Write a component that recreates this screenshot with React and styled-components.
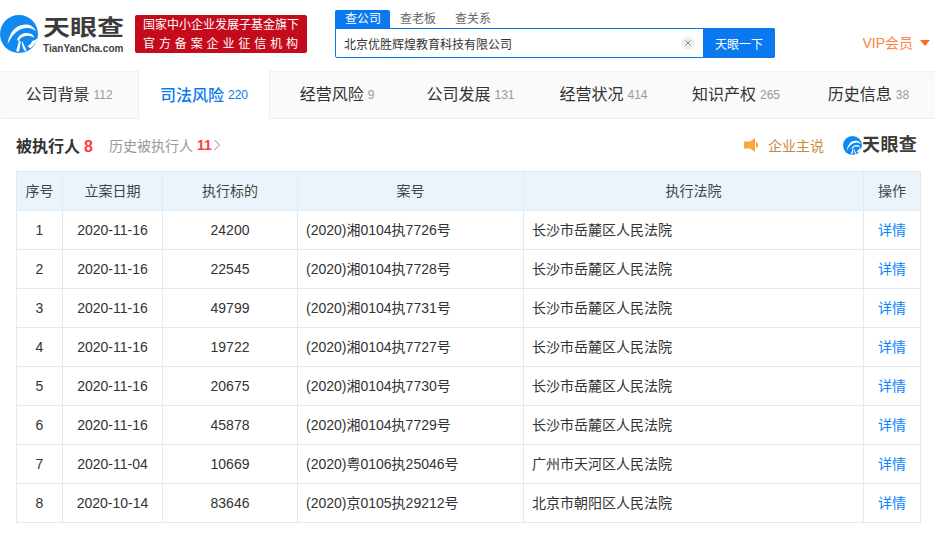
import React from 'react';
import styled, { createGlobalStyle } from 'styled-components';

const FONT = '"Liberation Sans", "Noto Sans CJK SC", sans-serif';

const GlobalStyle = createGlobalStyle`
  html, body {
    margin: 0;
    padding: 0;
    background: #fff;
    font-family: ${FONT};
  }
  * { box-sizing: border-box; }
`;

const Page = styled.div`
  width: 935px;
  height: 547px;
  overflow: hidden;
  background: #fff;
`;

// Top bar
const Header = styled.header`
  height: 71px;
  display: flex;
  align-items: flex-start;
  padding: 15px 0 0 0;
`;

const Logo = styled.div`
  display: flex;
  align-items: flex-start;
  gap: 5px;
  width: 135px;
`;

const LogoWords = styled.div`
  display: flex;
  flex-direction: column;
  align-items: flex-start;
`;

const LogoName = styled.div`
  font-size: 27px;
  line-height: 27px;
  height: 24px;
  margin-top: 3px;
  margin-bottom: 1px;
  font-weight: 700;
  color: #3b3b3b;
  transform: scaleY(0.78);
  transform-origin: center top;
`;

const LogoDomain = styled.div`
  font-size: 10px;
  line-height: 11px;
  font-weight: 700;
  color: #444;
`;

const Badge = styled.div`
  width: 172px;
  height: 38px;
  background: #c40b1c;
  border-radius: 2px;
  color: #fff;
  font-size: 12px;
  line-height: 19px;
  padding: 1px 0 0 8px;
`;

const BadgeLine = styled.div`
  white-space: nowrap;
  letter-spacing: ${props => props.$spacing}px;
`;

const Search = styled.div`
  width: 440px;
  margin-left: 28px;
  margin-top: -5px;
`;

const SearchTabs = styled.div`
  display: flex;
  height: 18px;
`;

const SearchTab = styled.div`
  width: 55px;
  padding-left: 10px;
  font-size: 12px;
  line-height: 18px;
  border-radius: 2px 2px 0 0;
  color: ${props => (props.$active ? '#fff' : '#666')};
  background: ${props => (props.$active ? '#0a79f0' : 'transparent')};
`;

const SearchBox = styled.div`
  display: flex;
  height: 30px;
  border: 1px solid #0a79f0;
  border-radius: 0 2px 2px 2px;
`;

const SearchText = styled.div`
  flex: 1;
  display: flex;
  align-items: center;
  justify-content: space-between;
  padding: 0 8px 0 8px;
  font-size: 12px;
  color: #333;
`;

const ClearButton = styled.div`
  width: 14px;
  height: 14px;
  border-radius: 50%;
  background: #f0f0f0;
  display: flex;
  align-items: center;
  justify-content: center;
`;

const SearchButton = styled.div`
  width: 72px;
  margin: -1px -1px -1px 0;
  background: #0a79f0;
  border-radius: 0 2px 2px 0;
  color: #fff;
  font-size: 12px;
  display: flex;
  align-items: center;
  justify-content: center;
`;

const Vip = styled.div`
  margin-left: auto;
  margin-top: 20px;
  padding-right: 5px;
  display: flex;
  align-items: center;
  gap: 7px;
  color: #ff8144;
  font-size: 14px;
  line-height: 16px;
`;

const Caret = styled.span`
  width: 0;
  height: 0;
  border-left: 5px solid transparent;
  border-right: 5px solid transparent;
  border-top: 6px solid #ff6a22;
`;

// Section tabs
const TabBar = styled.nav`
  height: 48px;
  display: grid;
  grid-template-columns: 138px 132px 134px 133px 133px 132px 133px;
  background: #fafafa;
  border-bottom: 1px solid #eee;
  box-shadow: inset 0 2px 2px -1px #ececec;
`;

const Tab = styled.div`
  display: flex;
  align-items: center;
  justify-content: center;
  gap: 4px;
  padding-bottom: 3px;
  font-size: 16px;
  color: ${props => (props.$active ? '#0a7af0' : '#333')};
  background: ${props => (props.$active ? '#fff' : 'transparent')};
  font-weight: ${props => (props.$active ? 500 : 400)};
  ${props => props.$active && 'margin-bottom: -1px; border-left: 1px solid #f0f0f0; border-right: 1px solid #f0f0f0;'}
`;

const TabCount = styled.span`
  font-size: 12px;
  margin-top: 3px;
  font-weight: 400;
  color: ${props => (props.$active ? '#0a7af0' : '#999')};
`;

// Section title row
const TitleRow = styled.div`
  height: 52px;
  display: flex;
  align-items: center;
  padding: 0 18px 0 16px;
`;

const Title = styled.div`
  font-size: 16px;
  font-weight: 700;
  color: #333;
`;

const RedCount = styled.span`
  font-weight: 700;
  color: #ff3b3b;
  margin-left: ${props => props.$gap}px;
`;

const History = styled.div`
  margin-left: 16px;
  display: flex;
  align-items: center;
  font-size: 14px;
  color: #999;
`;

const Chevron = styled.svg`
  margin-left: 1px;
`;

const Right = styled.div`
  margin-left: auto;
  display: flex;
  align-items: center;
`;

const Claim = styled.div`
  display: flex;
  align-items: center;
  gap: 8px;
  font-size: 14px;
  color: #c98a3c;
  margin-right: 19px;
`;

const SmallLogo = styled.div`
  display: flex;
  align-items: center;
  font-size: 18px;
  line-height: 20px;
  font-weight: 700;
  letter-spacing: 0.3px;
  color: #3b3b3b;
`;

// Data table
const Table = styled.table`
  width: 904px;
  margin-left: 16px;
  border-collapse: collapse;
  table-layout: fixed;
  font-size: 14px;
  color: #333;
  border: 1px solid #e0ecf5;
`;

const HeadCell = styled.th`
  height: 39px;
  padding: 0 0 3px;
  background: #ebf4fa;
  border: 1px solid #e0ecf5;
  font-weight: 400;
  text-align: center;
  color: #444;
`;

const Cell = styled.td`
  height: 39px;
  padding: ${props => (props.$left ? '0 8px 2px' : '0 0 1px')};
  border: 1px solid #e0ecf5;
  text-align: ${props => (props.$left ? 'left' : 'center')};
`;

const ActionCell = styled(Cell)`
  padding: 0 0 3px;
`;

const DetailLink = styled.a`
  color: #0a84ff;
  font-size: 14px;
  text-decoration: none;
`;

const LogoMark = ({ size }) => (
  <svg width={size} height={size} viewBox="0 0 40 40">
    <circle cx="20" cy="20" r="20" fill="#1089f0" />
    <path d="M8 31C9 20 16 9 28 10c4 0 8 3 10 7-4-3-8-4-12-3C18 15 12 22 8 31Z" fill="#fff" />
    <path d="M18 26c2-6 9-9 15-6 2 1 3 3 3 4-4-3-11-3-15 1l-1 3Z" fill="#fff" />
    <path d="M40 24c-1 4-4 8-8 11l-3-2c2-2 4-3 5-6 2 0 4-1 6-3Z" fill="#fff" />
    <path d="M20 27l2 1-2 11-3-1Z" fill="#fff" />
    <path d="M24 28c1 4 3 7 4 9l-2 1c-2-3-3-6-3-9Z" fill="#fff" />
  </svg>
);

const tabs = [
  ['公司背景', 112],
  ['司法风险', 220],
  ['经营风险', 9],
  ['公司发展', 131],
  ['经营状况', 414],
  ['知识产权', 265],
  ['历史信息', 38],
];

const rows = [
  ['2020-11-16', '24200', '(2020)湘0104执7726号', '长沙市岳麓区人民法院'],
  ['2020-11-16', '22545', '(2020)湘0104执7728号', '长沙市岳麓区人民法院'],
  ['2020-11-16', '49799', '(2020)湘0104执7731号', '长沙市岳麓区人民法院'],
  ['2020-11-16', '19722', '(2020)湘0104执7727号', '长沙市岳麓区人民法院'],
  ['2020-11-16', '20675', '(2020)湘0104执7730号', '长沙市岳麓区人民法院'],
  ['2020-11-16', '45878', '(2020)湘0104执7729号', '长沙市岳麓区人民法院'],
  ['2020-11-04', '10669', '(2020)粤0106执25046号', '广州市天河区人民法院'],
  ['2020-10-14', '83646', '(2020)京0105执29212号', '北京市朝阳区人民法院'],
];

export default function App() {
  return (
    <Page>
      <GlobalStyle />
      <Header>
        <Logo>
          <LogoMark size={38} />
          <LogoWords>
            <LogoName>天眼查</LogoName>
            <LogoDomain>TianYanCha.com</LogoDomain>
          </LogoWords>
        </Logo>
        <Badge>
          <BadgeLine $spacing={0}>国家中小企业发展子基金旗下</BadgeLine>
          <BadgeLine $spacing={3.9}>官方备案企业征信机构</BadgeLine>
        </Badge>
        <Search>
          <SearchTabs>
            <SearchTab $active>查公司</SearchTab>
            <SearchTab>查老板</SearchTab>
            <SearchTab>查关系</SearchTab>
          </SearchTabs>
          <SearchBox>
            <SearchText>
              北京优胜辉煌教育科技有限公司
              <ClearButton>
                <svg width="6" height="6" viewBox="0 0 6 6">
                  <path d="M0.5 0.5l5 5M5.5 0.5l-5 5" stroke="#777" strokeWidth="0.9" />
                </svg>
              </ClearButton>
            </SearchText>
            <SearchButton>天眼一下</SearchButton>
          </SearchBox>
        </Search>
        <Vip>VIP会员<Caret /></Vip>
      </Header>
      <TabBar>
        {tabs.map(([name, count], i) => (
          <Tab key={name} $active={i === 1}>
            {name}
            <TabCount $active={i === 1}>{count}</TabCount>
          </Tab>
        ))}
      </TabBar>
      <TitleRow>
        <Title>被执行人<RedCount $gap={4}>8</RedCount></Title>
        <History>
          历史被执行人<RedCount $gap={4}>11</RedCount>
          <Chevron width="8" height="12" viewBox="0 0 8 12">
            <path d="M1.5 1l5 5-5 5" fill="none" stroke="#888" strokeWidth="1" />
          </Chevron>
        </History>
        <Right>
          <Claim>
            <svg width="16" height="16" viewBox="0 0 16 16">
              <path d="M0 4.5h6L11 1v14l-5-3.5H0Z" fill="#f9a83a" />
              <path d="M12 5c3 1 3 5 0 6Z" fill="#f9a83a" />
            </svg>
            企业主说
          </Claim>
          <SmallLogo>
            <LogoMark size={19} />
            天眼查
          </SmallLogo>
        </Right>
      </TitleRow>
      <Table>
        <colgroup>
          <col style={{ width: 46 }} />
          <col style={{ width: 100 }} />
          <col style={{ width: 135 }} />
          <col style={{ width: 226 }} />
          <col style={{ width: 340 }} />
          <col style={{ width: 57 }} />
        </colgroup>
        <thead>
          <tr>
            {['序号', '立案日期', '执行标的', '案号', '执行法院', '操作'].map(h => (
              <HeadCell key={h}>{h}</HeadCell>
            ))}
          </tr>
        </thead>
        <tbody>
          {rows.map((row, i) => (
            <tr key={row[2]}>
              <Cell>{i + 1}</Cell>
              <Cell>{row[0]}</Cell>
              <Cell>{row[1]}</Cell>
              <Cell $left>{row[2]}</Cell>
              <Cell $left>{row[3]}</Cell>
              <ActionCell><DetailLink href="#">详情</DetailLink></ActionCell>
            </tr>
          ))}
        </tbody>
      </Table>
    </Page>
  );
}
